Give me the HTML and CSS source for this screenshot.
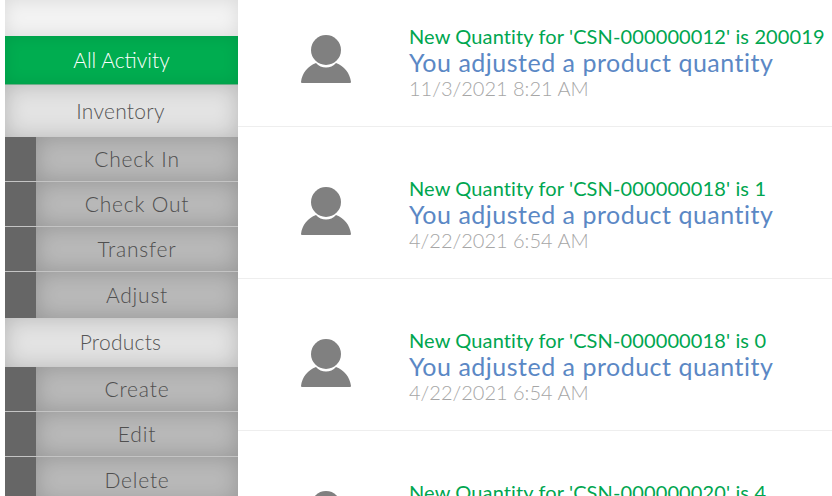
FILE: index.html
```html
<!DOCTYPE html>
<html lang="en">

<head>
    <meta charset="UTF-8">
    <meta name="viewport" content="width=device-width, initial-scale=1.0">
    <title>Activity</title>
    <link rel="stylesheet" href="styles.css">
</head>

<body>
    <section class="page">
        <nav class="sidebar">
            <div class="sidebar-top"></div>
            <a class="nav-item active">All Activity</a>
            <a class="nav-item inventory">Inventory</a>
            <a class="sub-item"><span class="sub-mark"></span><span class="sub-label">Check In</span></a>
            <a class="sub-item"><span class="sub-mark"></span><span class="sub-label">Check Out</span></a>
            <a class="sub-item"><span class="sub-mark"></span><span class="sub-label">Transfer</span></a>
            <a class="sub-item last"><span class="sub-mark"></span><span class="sub-label">Adjust</span></a>
            <a class="nav-item products">Products</a>
            <a class="sub-item"><span class="sub-mark"></span><span class="sub-label">Create</span></a>
            <a class="sub-item"><span class="sub-mark"></span><span class="sub-label">Edit</span></a>
            <a class="sub-item last"><span class="sub-mark"></span><span class="sub-label">Delete</span></a>
        </nav>

        <main class="feed">
            <article class="activity">
                <svg class="avatar" viewBox="0 0 52 49"><circle cx="26" cy="15" r="15"/><path d="M1 47C2 38 8 31 16 28C21 34 31 34 36 28C44 31 50 38 51 47Q51 48 50 48H2Q1 48 1 47Z"/></svg>
                <div class="activity-text">
                    <p class="activity-change">New Quantity for 'CSN-000000012' is 200019</p>
                    <p class="activity-title">You adjusted a product quantity</p>
                    <p class="activity-date">11/3/2021 8:21 AM</p>
                </div>
            </article>
            <article class="activity">
                <svg class="avatar" viewBox="0 0 52 49"><circle cx="26" cy="15" r="15"/><path d="M1 47C2 38 8 31 16 28C21 34 31 34 36 28C44 31 50 38 51 47Q51 48 50 48H2Q1 48 1 47Z"/></svg>
                <div class="activity-text">
                    <p class="activity-change">New Quantity for 'CSN-000000018' is 1</p>
                    <p class="activity-title">You adjusted a product quantity</p>
                    <p class="activity-date">4/22/2021 6:54 AM</p>
                </div>
            </article>
            <article class="activity">
                <svg class="avatar" viewBox="0 0 52 49"><circle cx="26" cy="15" r="15"/><path d="M1 47C2 38 8 31 16 28C21 34 31 34 36 28C44 31 50 38 51 47Q51 48 50 48H2Q1 48 1 47Z"/></svg>
                <div class="activity-text">
                    <p class="activity-change">New Quantity for 'CSN-000000018' is 0</p>
                    <p class="activity-title">You adjusted a product quantity</p>
                    <p class="activity-date">4/22/2021 6:54 AM</p>
                </div>
            </article>
            <article class="activity">
                <svg class="avatar" viewBox="0 0 52 49"><circle cx="26" cy="15" r="15"/><path d="M1 47C2 38 8 31 16 28C21 34 31 34 36 28C44 31 50 38 51 47Q51 48 50 48H2Q1 48 1 47Z"/></svg>
                <div class="activity-text">
                    <p class="activity-change">New Quantity for 'CSN-000000020' is 4</p>
                    <p class="activity-title">You adjusted a product quantity</p>
                    <p class="activity-date">4/22/2021 6:54 AM</p>
                </div>
            </article>
        </main>
    </section>
</body>

</html>
```

FILE: styles.css
```css
html,
body {
    margin: 0;
    height: 100%;
    overflow: hidden;
    background: #fff;
    font-family: "Lato", "Open Sans", sans-serif;
}

.page {
    display: flex;
    height: 496px;
    overflow: hidden;
}

.sidebar {
    flex: none;
    width: 233px;
    margin-left: 5px;
    display: flex;
    flex-direction: column;
}

.sidebar-top {
    flex: none;
    height: 36px;
    background: #f3f3f3;
    box-shadow: inset 0 0 18px rgba(0, 0, 0, 0.1);
}

.nav-item {
    flex: none;
    height: 49px;
    display: flex;
    align-items: center;
    justify-content: center;
    padding: 0 2px 2px 0;
    box-sizing: border-box;
    font-size: 21px;
    font-weight: 300;
    letter-spacing: 0.25px;
    color: #555;
    background: #e3e3e3;
    box-shadow: inset 0 0 22px rgba(0, 0, 0, 0.2);
}

.nav-item.active {
    padding: 0 0 2px;
    border-bottom: 1px solid #6fae8a;
    letter-spacing: 0;
    color: #fff;
    background: #00ad50;
    box-shadow: inset 0 0 16px rgba(0, 0, 0, 0.1);
}

.nav-item.inventory {
    height: 52px;
}

.sub-item {
    flex: none;
    height: 45px;
    display: flex;
    box-sizing: border-box;
    border-bottom: 1px solid #c4c4c4;
    font-size: 21px;
    font-weight: 300;
    letter-spacing: 0.8px;
    color: #4f4f4f;
}

.sub-item.last {
    height: 46px;
    border-bottom: 0;
}

.sub-mark {
    flex: none;
    width: 31px;
    background: #666;
}

.sub-label {
    flex: 1;
    display: flex;
    align-items: center;
    justify-content: center;
    padding-bottom: 2px;
    background: #b9b9b9;
    box-shadow: inset 0 0 22px rgba(0, 0, 0, 0.2);
}

.feed {
    flex: 1;
    margin-top: -25px;
}

.activity {
    height: 152px;
    display: flex;
    align-items: center;
    box-sizing: border-box;
    border-bottom: 1px solid #eee;
    padding: 20px 0 0 62px;
}

.avatar {
    flex: none;
    width: 52px;
    height: 49px;
    margin: 0 57px 2px 0;
    fill: #808080;
}

.activity-text {
    margin-top: 2px;
    white-space: nowrap;
    line-height: 26px;
}

.activity-text p {
    margin: 0;
}

.activity-change {
    font-size: 20px;
    letter-spacing: 0.12px;
    color: #00a650;
}

.activity-title {
    font-size: 25px;
    letter-spacing: 0.5px;
    color: #5b88c5;
}

.activity-date {
    font-size: 20px;
    font-weight: 300;
    color: #a6a6a6;
}
```
